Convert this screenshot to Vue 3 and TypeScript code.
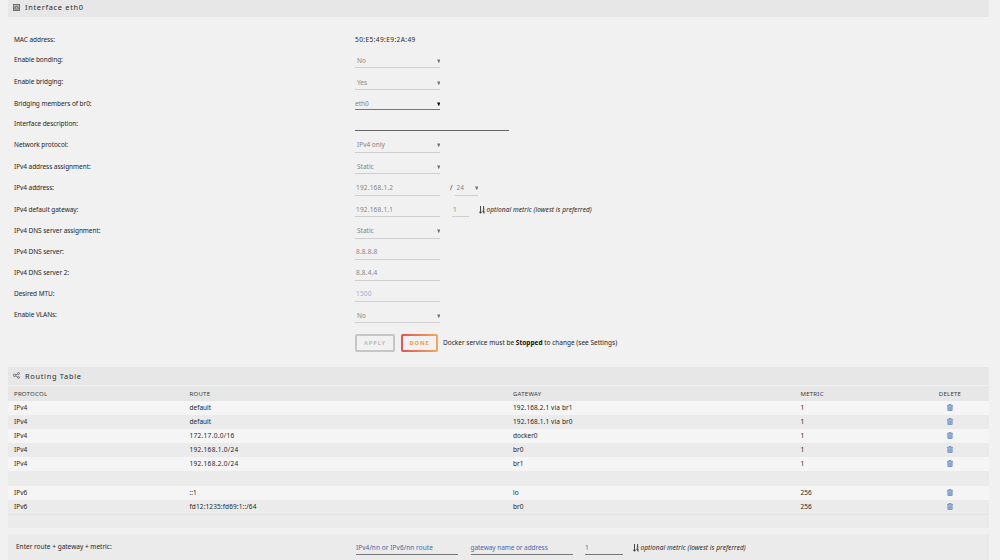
<script setup lang="ts">
interface Field {
  label: string
  kind: 'text' | 'select' | 'input'
  value: string
  height: number
  line: number
  tone?: string
  extra?: 'mask' | 'metric'
}

const fields: Field[] = [
  { label: 'MAC address:', kind: 'text', value: '50:E5:49:E9:2A:49', height: 20, line: 19 },
  { label: 'Enable bonding:', kind: 'select', value: 'No', height: 22, line: 19, tone: 'low' },
  { label: 'Enable bridging:', kind: 'select', value: 'Yes', height: 22, line: 19, tone: 'low' },
  { label: 'Bridging members of br0:', kind: 'select', value: 'eth0', height: 20, line: 17, tone: 'active' },
  { label: 'Interface description:', kind: 'input', value: '', height: 21, line: 18, tone: 'wide' },
  { label: 'Network protocol:', kind: 'select', value: 'IPv4 only', height: 22, line: 19 },
  { label: 'IPv4 address assignment:', kind: 'select', value: 'Static', height: 21, line: 18 },
  { label: 'IPv4 address:', kind: 'input', value: '192.168.1.2', height: 22, line: 19, extra: 'mask' },
  { label: 'IPv4 default gateway:', kind: 'input', value: '192.168.1.1', height: 21, line: 18, extra: 'metric' },
  { label: 'IPv4 DNS server assignment:', kind: 'select', value: 'Static', height: 21, line: 19 },
  { label: 'IPv4 DNS server:', kind: 'input', value: '8.8.8.8', height: 21, line: 19 },
  { label: 'IPv4 DNS server 2:', kind: 'input', value: '8.8.4.4', height: 21, line: 19 },
  { label: 'Desired MTU:', kind: 'input', value: '1500', height: 21, line: 19, tone: 'hint' },
  { label: 'Enable VLANs:', kind: 'select', value: 'No', height: 30, line: 19, tone: 'low' },
]

interface Route {
  protocol: string
  route: string
  gateway: string
  metric: string
}

const routes: Route[] = [
  { protocol: 'IPv4', route: 'default', gateway: '192.168.2.1 via br1', metric: '1' },
  { protocol: 'IPv4', route: 'default', gateway: '192.168.1.1 via br0', metric: '1' },
  { protocol: 'IPv4', route: '172.17.0.0/16', gateway: 'docker0', metric: '1' },
  { protocol: 'IPv4', route: '192.168.1.0/24', gateway: 'br0', metric: '1' },
  { protocol: 'IPv4', route: '192.168.2.0/24', gateway: 'br1', metric: '1' },
  { protocol: '', route: '', gateway: '', metric: '' },
  { protocol: 'IPv6', route: '::1', gateway: 'lo', metric: '256' },
  { protocol: 'IPv6', route: 'fd12:1235:fd69:1::/64', gateway: 'br0', metric: '256' },
]
</script>

<template>
  <main class="page">
    <header class="bar first">
      <svg class="bar-icon" viewBox="0 0 8 8"><rect x=".5" y=".5" width="7" height="7" fill="#b5b5b5" stroke="#666" /><path d="M2 5.7V4h1V3h2v1h1v1.7z" fill="#ddd" stroke="#555" stroke-width=".8" /></svg>
      <h1>Interface eth0</h1>
    </header>

    <section class="form">
      <div v-for="f in fields" :key="f.label" class="row" :style="{ height: f.height + 'px' }">
        <label class="label"><span>{{ f.label }}</span></label>
        <div v-if="f.kind === 'text'" class="plain"><span>{{ f.value }}</span></div>
        <div v-else class="control" :class="[f.kind, f.tone]" :style="{ height: f.line + 'px' }">
          <span class="value">{{ f.value }}</span>
          <svg v-if="f.kind === 'select'" class="caret" viewBox="0 0 4 5"><path d="M0 .5h4L2 5z" /></svg>
        </div>
        <template v-if="f.extra === 'mask'">
          <span class="slash">/</span>
          <div class="control select mask" :style="{ height: f.line + 'px' }">
            <span class="value">24</span>
            <svg class="caret" viewBox="0 0 4 5"><path d="M0 .5h4L2 5z" /></svg>
          </div>
        </template>
        <template v-if="f.extra === 'metric'">
          <div class="control input metric" :style="{ height: f.line + 'px' }"><span class="value">1</span></div>
          <div class="note">
            <svg class="sort" viewBox="0 0 6 8"><path d="M1.5 0v7M.2 5.6l1.3 1.7 1.3-1.7M4.6.2v3M4 .8l.6-.5M3.8 3.2h1.6M5 7.6V4.7H4v1.3h1" /></svg>
            <em>optional metric (lowest is preferred)</em>
          </div>
        </template>
      </div>
    </section>

    <div class="actions">
      <button class="btn apply" disabled>APPLY</button>
      <button class="btn done">DONE</button>
      <span class="docker">Docker service must be <b>Stopped</b> to change (see Settings)</span>
    </div>

    <header class="bar second">
      <svg class="bar-icon" viewBox="0 0 8 8"><g fill="none" stroke="#555" stroke-width=".85"><circle cx="1.8" cy="3.8" r="1.4" /><circle cx="6.3" cy="1.7" r="1.1" /><circle cx="6.3" cy="6.2" r="1.1" /><path d="M3.1 3.3l2.2-1M3 4.5l2.3 1.2" /></g></svg>
      <h2>Routing Table</h2>
    </header>

    <section class="table">
      <div class="tr head">
        <span>PROTOCOL</span><span>ROUTE</span><span>GATEWAY</span><span>METRIC</span><span class="del">DELETE</span>
      </div>
      <div v-for="(r, i) in routes" :key="i" class="tr">
        <span>{{ r.protocol }}</span><span :class="{ num: /\d\//.test(r.route), long: r.route.startsWith('fd') }">{{ r.route }}</span><span :class="{ via: r.gateway.includes('via') }">{{ r.gateway }}</span><span>{{ r.metric }}</span>
        <span class="del">
          <svg v-if="r.protocol" class="trash" viewBox="0 0 6 7"><path d="M0 1.4h6M2 1.2V.4h2v.8" fill="none" stroke="#5f80bb" stroke-width=".8" /><path d="M.9 1.8v4.6h4.2V1.8" fill="#b4c4e0" stroke="#5f80bb" stroke-width=".8" /><path d="M2.3 2.6v3M3.7 2.6v3" stroke="#5f80bb" stroke-width=".6" /></svg>
        </span>
      </div>
      <div class="spacer"></div>
    </section>

    <section class="entry">
      <label class="entry-label">Enter route + gateway + metric:</label>
      <div class="field route">IPv4/nn or IPv6/nn route</div>
      <div class="field gateway">gateway name or address</div>
      <div class="field cost">1</div>
      <div class="note">
        <svg class="sort" viewBox="0 0 6 8"><path d="M1.5 0v7M.2 5.6l1.3 1.7 1.3-1.7M4.6.2v3M4 .8l.6-.5M3.8 3.2h1.6M5 7.6V4.7H4v1.3h1" /></svg>
        <em>optional metric (lowest is preferred)</em>
      </div>
    </section>
  </main>
</template>

<style>
body {
  margin: 0;
  background: #f1f1f1;
}
</style>

<style scoped>
.page {
  box-sizing: border-box;
  width: 1000px;
  height: 560px;
  padding: 0 11px 0 8px;
  overflow: hidden;
  background: #f1f1f1;
  color: #262626;
  font: 6.5px/10px "Noto Sans", "Open Sans", sans-serif;
  white-space: nowrap;
}
.bar {
  box-sizing: border-box;
  display: flex;
  align-items: center;
  height: 18px;
  padding: 0 0 1px 5px;
  gap: 5px;
  background: #e7e7e7;
}
.bar.first {
  height: 17px;
  padding-bottom: 3px;
}
.bar-icon {
  width: 7px;
  height: 7px;
}
h1, h2 {
  margin: 0;
  font-size: 7.4px;
  font-weight: 400;
  letter-spacing: 0.7px;
  color: #2b2b2b;
}
.form {
  padding: 12px 0 0 6px;
}
.row {
  display: flex;
  align-items: flex-start;
}
.label {
  width: 341px;
  padding-top: 6px;
  letter-spacing: -0.06px;
}
.plain {
  padding-top: 6px;
  letter-spacing: 0.42px;
}
.control {
  box-sizing: border-box;
  display: flex;
  justify-content: space-between;
  width: 85px;
  padding: 6px 0 0 1px;
  border-bottom: 1px solid #cfcfcf;
  color: #858585;
}
.input {
  letter-spacing: 0.2px;
}
.low {
  padding-top: 7px;
}
.select {
  padding-left: 2px;
}
.caret {
  width: 3.5px;
  height: 4.4px;
  margin-top: 2.5px;
  fill: #777;
}
.active {
  padding: 6px 0 0;
  border-bottom: 1px solid #777;
}
.active .caret {
  fill: #111;
}
.wide {
  width: 154px;
  border-color: #666;
}
.hint {
  color: #9daad0;
}
.slash {
  margin-left: 10px;
  padding-top: 6px;
}
.mask {
  width: 23px;
  margin-left: 3px;
  padding-left: 1px;
}
.metric {
  width: 17px;
  margin-left: 12px;
}
.note {
  display: flex;
  align-items: center;
  gap: 1.5px;
  margin-left: 10px;
  padding-top: 6px;
  letter-spacing: 0.08px;
}
.sort {
  width: 6px;
  height: 8px;
  fill: none;
  stroke: #333;
  stroke-width: 0.9;
}
.actions {
  display: flex;
  align-items: center;
  height: 18px;
  padding: 0 0 0 347px;
}
.btn {
  box-sizing: border-box;
  height: 18px;
  padding: 0;
  border: 2px solid #c6c6c6;
  border-radius: 2px;
  background: none;
  color: #bcbcbc;
  font: 700 5.6px/12px "Noto Sans", sans-serif;
  letter-spacing: 0.95px;
}
.apply {
  width: 40px;
}
.done {
  width: 37px;
  margin-left: 6px;
  border-color: transparent;
  background: linear-gradient(#f1f1f1, #f1f1f1) padding-box, linear-gradient(90deg, #dd5555, #f3a85c) border-box;
  color: #ed9a45;
}
.docker {
  margin-left: 5px;
}
.docker b {
  color: #111;
}
.second {
  margin-top: 15px;
}
.table {
  margin-top: 1px;
  background: #ebebeb;
}
.tr {
  display: grid;
  grid-template-columns: 175.5px 323.5px 287.5px 119px 1fr;
  align-items: center;
  height: 14.1px;
  padding-left: 6px;
}
.tr:nth-child(even) {
  background: #f5f5f5;
}
.head {
  height: 15px;
  background: #e7e7e7;
  color: #3a3a3a;
  font-size: 6px;
  letter-spacing: 0.25px;
}
.num {
  letter-spacing: 0.3px;
}
.long {
  letter-spacing: 0.12px;
}
.via {
  letter-spacing: 0.12px;
}
.del {
  width: 61px;
  text-align: center;
  line-height: 0;
}
.trash {
  width: 6px;
  height: 7px;
  margin-top: -1px;
}
.spacer {
  box-sizing: border-box;
  height: 14px;
  border-top: 1px solid #e4e4e4;
}
.entry {
  display: flex;
  align-items: flex-start;
  height: 40px;
  margin-top: 6px;
  padding: 8px 0 0 8px;
  background: #ebebeb;
}
.entry-label {
  width: 340px;
}
.field {
  box-sizing: border-box;
  width: 102px;
  height: 13px;
  margin-right: 12.5px;
  padding-top: 1px;
  border-bottom: 1px solid #777;
  color: #4a69a9;
}
.route {
  letter-spacing: 0.06px;
}
.gateway {
  letter-spacing: -0.07px;
}
.cost {
  width: 38px;
  margin-right: 0;
}
.entry .note {
  padding-top: 1px;
}
</style>
